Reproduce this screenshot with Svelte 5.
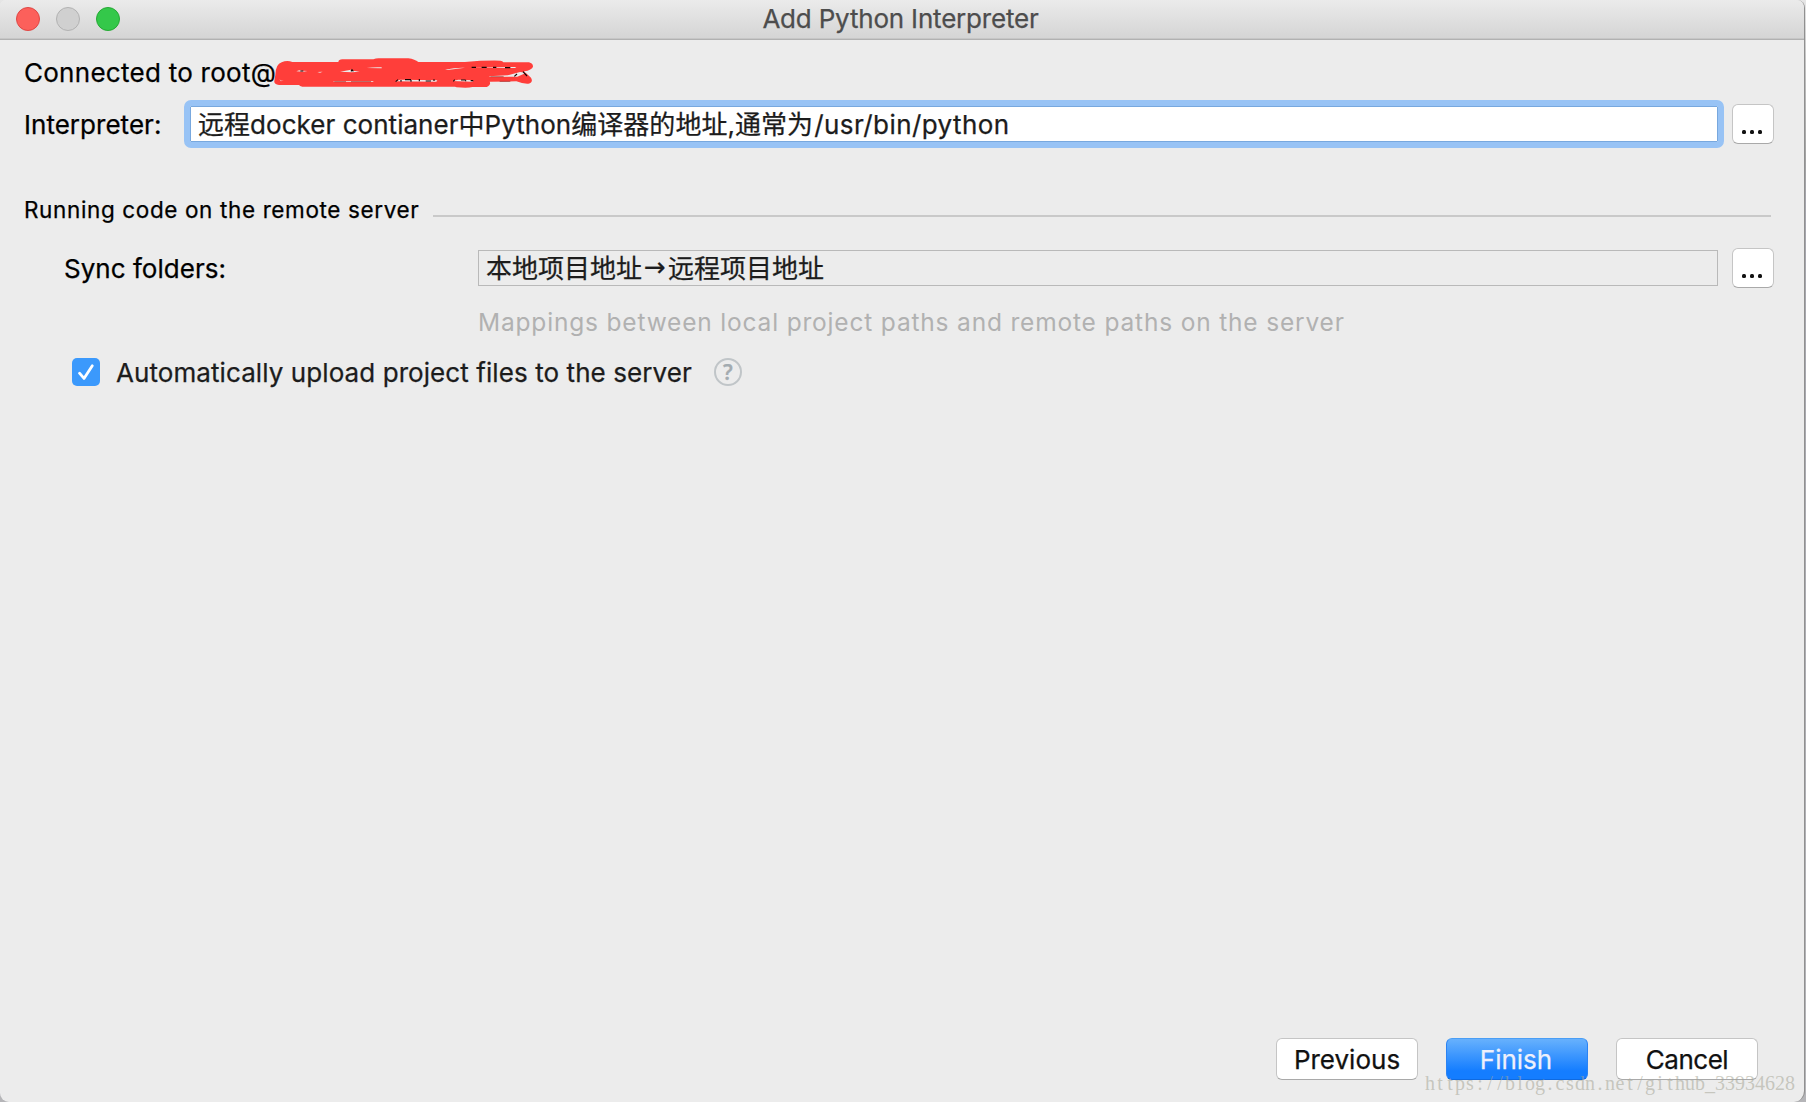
<script>
  let interpreter = { name: '远程docker contianer中Python编译器的地址,通常为', path: '/usr/bin/python' };
  let mapping = { local: '本地项目地址', remote: '远程项目地址' };
  let autoUpload = true;
  const watermark = [...'https://blog.csdn.net/github_33934628'];
</script>

<div class="window">
  <header class="titlebar">
    <div class="lights">
      <span class="light close"></span>
      <span class="light minimize"></span>
      <span class="light zoom"></span>
    </div>
    <h1>Add Python Interpreter</h1>
  </header>

  <main>
    <div class="connected">
      <span>Connected to root@</span>
      <svg class="redaction" viewBox="27 21 780 96" width="260" height="32" aria-hidden="true">
        <path
          fill="#ff3e3a"
          d="M31 75 Q32 42 50 37 Q66 29 82 36 L220 36 Q221 28 232 28 L325 28 Q334 24 345 25 L430 25 Q450 28 460 36 L600 36 Q655 31 706 32 Q713 33 715 37 L792 37 Q804 40 804 50 Q801 60 777 64 L798 83 Q806 98 790 101 Q774 102 754 94 L674 95 Q679 105 665 111 L622 111 Q610 115 575 112 L570 110 L112 110 Q104 109 102 105 L42 105 Q26 103 28 92 Z"
        />
        <g fill="#ececec">
          <path d="M94 64 Q105 58 113 62 L127 63 L114 65Z M157 66 L173 65 L165 68Z M225 65 L258 59 L264 62 L284 65 L260 67Z M305 54 Q325 51 350 52 L350 55Z M540 59 Q570 52 600 53 L548 60Z M617 52 L750 51 L754 54Z M672 79 L728 76 L765 66 L784 68 L757 80 L676 81Z M203 94 L324 93 L326 95 L210 96Z M392 94 L405 89 L517 91 L514 95Z M562 93 L580 89 L626 91 L622 95Z M43 88 L49 92 L56 91 L48 94Z" />
        </g>
        <g fill="none" stroke="#140606" stroke-width="3.5">
          <path d="M106 63h9M258 64l3-5 4 5M392 95l7-6M408 95v-5M420 89h18M438 90v5M463 87v7M482 93h16M507 88v5M565 94l4-5M588 90h14M602 94v-3M617 92h8M620 52h13M650 52h15M684 52h10M720 53h16M748 79l8-7M774 65l12 13" />
          <path stroke="#9b2723" stroke-width="2" d="M208 95h35M258 95h60M704 94h32M676 80h40" />
        </g>
      </svg>
    </div>

    <div class="row interpreter">
      <label for="interp">Interpreter:</label>
      <div class="field focused" id="interp">
        {interpreter.name}<span class="path">{interpreter.path}</span>
      </div>
      <button class="browse" aria-label="Browse"><i></i><i></i><i></i></button>
    </div>

    <div class="section">
      <h2>Running code on the remote server</h2>
      <hr />
    </div>

    <div class="row sync">
      <span class="label">Sync folders:</span>
      <div class="field">{mapping.local}<span class="arrow">→</span>{mapping.remote}</div>
      <button class="browse" aria-label="Browse"><i></i><i></i><i></i></button>
    </div>
    <p class="hint">Mappings between local project paths and remote paths on the server</p>

    <div class="upload">
      <span class="checkbox" role="checkbox" aria-checked={autoUpload} aria-label="Automatic upload" tabindex="-1">
        <svg viewBox="0 0 28 28" width="28" height="28">
          <path d="M7.5 15.2 L12 20.4 L20.3 7.8" fill="none" stroke="#fff" stroke-width="2.8" stroke-linecap="round" stroke-linejoin="round" />
        </svg>
      </span>
      <span class="upload-text">Automatically upload project files to the server</span>
      <span class="help">?</span>
    </div>
  </main>

  <footer>
    <button class="action">Previous</button>
    <button class="action primary">Finish</button>
    <button class="action">Cancel</button>
  </footer>
</div>
<div class="watermark">{#each watermark as ch}<span>{ch}</span>{/each}</div>

<style>
  :global(body) {
    background: linear-gradient(#e6e6e6 0, #c4c4c4 60px, #a2a2a2 160px, #a5a5ac 200px, #b5b5b8 100%);
    overflow: hidden;
  }
  .window {
    box-sizing: border-box;
    width: 1805px;
    height: 1102px;
    display: flex;
    flex-direction: column;
    overflow: hidden;
    background: #ececec;
    border-right: 1px solid #909090;
    border-radius: 6px 8px 11px 9px;
    color: #000;
    font: 26px/32px Inter, 'Noto Sans CJK SC', sans-serif;
    -webkit-text-stroke: 0.25px;
  }
  .titlebar {
    box-sizing: border-box;
    flex: none;
    height: 40px;
    display: grid;
    grid-template-columns: 1fr auto 1fr;
    align-items: center;
    padding: 0 3px 2px 0;
    background: linear-gradient(#ebebeb, #d4d4d4);
    border-bottom: 1px solid #b1b1b1;
    box-shadow: inset 0 -1px #c6c6c6;
  }
  .lights { display: flex; gap: 16px; padding-left: 16px; }
  .light { box-sizing: border-box; width: 24px; height: 24px; border-radius: 50%; border: 1px solid; }
  .close { background: #fc605b; border-color: #df4744; }
  .minimize { background: #d0d0d0; border-color: #b2b2b2; }
  .zoom { background: #34c84a; border-color: #25a934; }
  h1 { margin: 0; font-size: 26px; font-weight: 400; color: #4d4d4d; letter-spacing: -0.19px; }
  main { flex: 1; padding: 16px 30px 0 24px; }
  .connected { display: flex; height: 34px; letter-spacing: 0.27px; line-height: 34px; }
  .redaction { display: block; margin: 1px 0 0 -2px; }
  .row { display: flex; align-items: center; }
  .interpreter { height: 48px; margin-top: 10px; }
  .interpreter label { width: 166px; padding-top: 2px; letter-spacing: 0.03px; }
  .field {
    box-sizing: border-box;
    flex: 1;
    height: 36px;
    padding: 1px 7px 0;
    border: 1px solid #b9b9b9;
    color: #1c1c1c;
    line-height: 34px;
    white-space: nowrap;
  }
  .focused {
    border-color: #78a8de;
    background: #fff;
    outline: 6px solid #98c3f5;
    border-radius: 1px;
    letter-spacing: 0.04px;
  }
  .path { letter-spacing: 0.43px; margin-left: 1px; }
  .browse {
    box-sizing: border-box;
    width: 42px;
    height: 40px;
    margin-left: 14px;
    padding: 0 2px 9px 0;
    display: flex;
    justify-content: center;
    align-items: flex-end;
    gap: 4px;
    background: #fff;
    border: 1px solid #c5c5c5;
    border-bottom-color: #a9a9a9;
    border-radius: 6px;
  }
  .browse i { width: 4px; height: 4px; border-radius: 1.5px; background: #111; }
  .section { display: flex; align-items: center; height: 32px; margin-top: 45px; padding-right: 3px; }
  h2 { margin: 0; padding-top: 2px; font-size: 22.5px; font-weight: 400; letter-spacing: 0.63px; white-space: nowrap; }
  hr { flex: 1; height: 2px; margin: 13px 0 0 14px; border: 0; background: #c9c9c9; }
  .sync { height: 40px; margin-top: 23px; padding-left: 40px; }
  .label { width: 414px; padding-top: 2px; letter-spacing: 0.03px; }
  .arrow {
    display: inline-block;
    width: 26px;
    height: 30px;
    font: 26px/31px 'DejaVu Sans', sans-serif;
    text-align: center;
    vertical-align: top;
  }
  .hint {
    margin: 18px 0 0 454px;
    font-size: 24.5px;
    color: #b1b1b1;
    letter-spacing: 0.82px;
    white-space: nowrap;
    -webkit-text-stroke: 0;
  }
  .upload { display: flex; align-items: center; height: 32px; margin: 18px 0 0 48px; }
  .checkbox {
    width: 28px;
    height: 28px;
    border-radius: 5px;
    background: #3b99fc;
  }
  .checkbox svg { display: block; }
  .upload-text { margin-left: 16px; padding-top: 2px; color: #1c1c1c; letter-spacing: 0.08px; }
  .help {
    box-sizing: border-box;
    width: 28px;
    height: 28px;
    margin-left: 22px;
    border: 2px solid #c0c5c8;
    border-radius: 50%;
    color: #a3abb0;
    font: 600 21px/24px 'Noto Sans', sans-serif;
    text-align: center;
  }
  footer { flex: none; display: flex; justify-content: flex-end; gap: 28px; padding: 0 46px 22px; }
  .action {
    box-sizing: border-box;
    width: 142px;
    height: 42px;
    padding: 1px 0 0;
    border: 1px solid #c5c5c5;
    border-bottom-color: #a9a9a9;
    border-radius: 6px;
    background: #fff;
    color: #111;
    font: inherit;
  }
  .action:last-child { letter-spacing: -0.5px; }
  .primary {
    padding-right: 2px;
    border-color: #4a9ef5 #2b83f3 #0f6ae0;
    background: linear-gradient(#67b1fd, #147dff 80%);
    color: #eef0fb;
  }
  .watermark {
    position: absolute;
    right: 11px;
    bottom: 7px;
    display: flex;
    color: rgba(165, 165, 150, 0.55);
    font: 20px/24px 'Liberation Serif', serif;
  }
  .watermark span { width: 10px; text-align: center; }
</style>
